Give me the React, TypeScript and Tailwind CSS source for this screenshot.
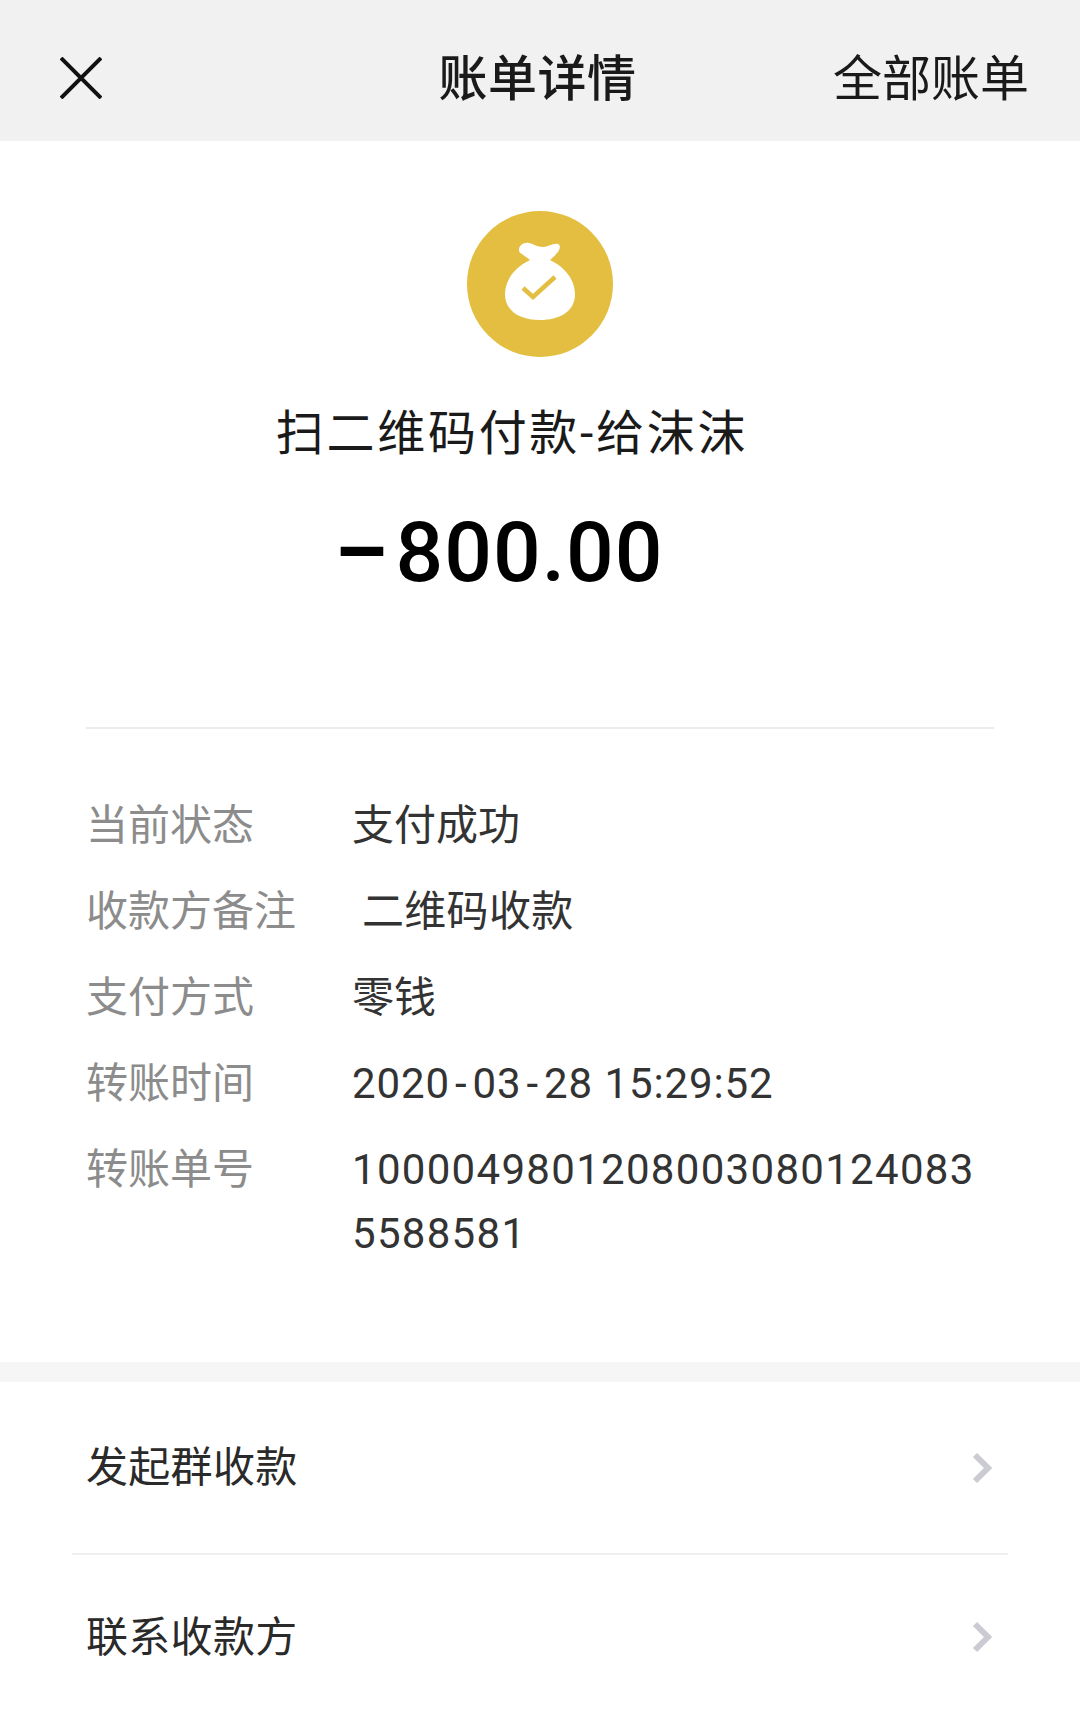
const Sep = ({ children }: { children: string }) => <span className="mx-[5px]">{children}</span>;

const details = [
  { label: '当前状态', value: '支付成功', className: '' },
  { label: '收款方备注', value: '二维码收款', className: 'pl-[10px] tracking-[0.3px]' },
  { label: '支付方式', value: '零钱', className: '' },
  {
    label: '转账时间',
    value: (
      <>
        2020<Sep>-</Sep>03<Sep>-</Sep>28 15:29:52
      </>
    ),
    className: 'tracking-[0.9px]',
  },
  { label: '转账单号', value: '10000498012080030801240835588581', className: 'tracking-[1.3px]' },
];

const actions = [
  { label: '发起群收款', height: 'h-[171px]' },
  { label: '联系收款方', height: 'h-[164px]' },
];

const MoneyBag = () => (
  <div className="flex h-[146px] w-[146px] items-center justify-center rounded-full bg-[#e4be40]">
    <svg viewBox="0 0 70 78" className="mb-[6px] h-[78px] w-[70px]">
      <path
        d="M14 8C14 3 19 0 24 1C29 2 32 5 38 5C43 5 48 1 53 2C56 3 55 8 52 11C50 14 47 16 45 18C60 25 70 38 70 52C70 70 54 78 35 78C16 78 0 70 0 52C0 38 10 25 25 18C23 16 19 14 17 12C15 11 14 10 14 8Z"
        fill="#fff"
      />
      <path d="M18 46l10 9 22-20" fill="none" stroke="#e4be40" strokeWidth="4.5" />
    </svg>
  </div>
);

const Chevron = () => (
  <svg viewBox="0 0 20 32" className="h-[32px] w-[20px]">
    <path d="M3 3l13 13L3 29" fill="none" stroke="#cbcbd3" strokeWidth="6" />
  </svg>
);

const App = () => {
  return (
    <div className="min-h-screen bg-white font-['Roboto','Noto_Sans_CJK_SC',sans-serif]">
      <header className="flex h-[141px] items-center justify-between bg-[#f1f1f1] pt-[16px] pl-[60px] pr-[51px] text-[49px] text-[#1a1a1a]">
        <svg viewBox="0 0 42 42" className="mb-[2px] h-[42px] w-[42px]">
          <path d="M1 1l40 40M41 1L1 41" fill="none" stroke="#111" strokeWidth="4" />
        </svg>
        <span className="mt-[3px] ml-[140px] font-medium tracking-[0.5px]">账单详情</span>
        <span className="mt-[3px]">全部账单</span>
      </header>

      <section className="flex flex-col items-center pt-[70px]">
        <MoneyBag />
        <h1 className="mt-[45px] ml-[-56px] text-[48px] leading-[64px] tracking-[2.7px] text-[#1a1a1a]">扫二维码付款-给沫沫</h1>
        <p className="mt-[37px] ml-[-82px] text-[84px] leading-[100px] font-medium tracking-[1px] text-black">
          <span className="mr-[7px] font-bold">–</span>800.00
        </p>
      </section>

      <div className="mx-[86px] mt-[124px] h-[2px] bg-[#ececec]" />

      <dl className="pl-[86px] pr-[87px] pt-[65px] pb-[96px] text-[42px]">
        {details.map((row) => (
          <div key={row.label} className="mb-[22px] flex leading-[64px] last:mb-0">
            <dt className="w-[266px] shrink-0 text-[#8c8c8c]">{row.label}</dt>
            <dd className={`w-[640px] break-all text-[#333] ${row.className}`}>{row.value}</dd>
          </div>
        ))}
      </dl>

      <div className="h-[20px] bg-[#f6f6f6]" />

      {actions.map((item, i) => (
        <div key={item.label}>
          {i > 0 && <div className="mx-[72px] h-[2px] bg-[#efefef]" />}
          <div className={`flex items-center justify-between pl-[86px] pr-[88px] text-[42px] tracking-[0.3px] text-[#2a2a2a] ${item.height}`}>
            <span>{item.label}</span>
            <Chevron />
          </div>
        </div>
      ))}
    </div>
  );
};

export default App;
